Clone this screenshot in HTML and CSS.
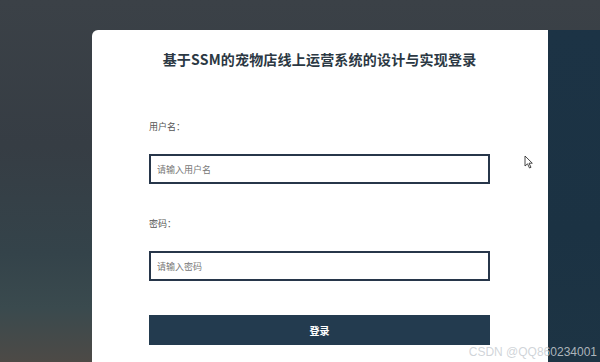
FILE: index.html
```html
<!DOCTYPE html>
<html lang="zh-CN">
<head>
  <meta charset="UTF-8">
  <meta name="viewport" content="width=device-width, initial-scale=1.0">
  <title>登录</title>
  <link rel="stylesheet" href="styles.css">
</head>
<body>
  <div class="login">
    <section class="form-pane">
      <h1 class="title">基于SSM的宠物店线上运营系统的设计与实现登录</h1>
      <form class="form">
        <label class="label label-user">用户名：</label>
        <input class="input" type="text" placeholder="请输入用户名">
        <label class="label label-pass">密码：</label>
        <input class="input" type="password" placeholder="请输入密码">
        <button class="btn" type="button">登录</button>
      </form>
    </section>
    <section class="side-pane"></section>
  </div>
  <svg class="cursor" width="10" height="14" viewBox="0 0 10 14">
    <path d="M1 1 L1 11 L3.5 8.8 L5.5 13 L7 12.3 L5 8.2 L8.3 8.2 Z" fill="#fff" stroke="#333" stroke-width="0.9" stroke-linejoin="round"/>
  </svg>
  <div class="watermark">CSDN @QQ860234001</div>
</body>
</html>
```
FILE: styles.css
```css
/* Base */
* { box-sizing: border-box; }
html, body { height: 100%; }
body {
  margin: 0;
  overflow: hidden;
  font-family: "Noto Sans CJK SC", "Noto Sans", sans-serif;
  background: linear-gradient(180deg, #3b4147 0%, #363d44 40%, #34434a 70%, #3a4a4e 85%, #4d4a46 100%);
  padding: 30px 0 0 92px;
  position: relative;
}

/* Login box */
.login {
  display: flex;
  height: 100%;
}
.form-pane {
  width: 456px;
  background: #fff;
  border-radius: 6px 0 0 0;
  padding: 19px 58px 0 57px;
}
.side-pane {
  flex: 1;
  background: linear-gradient(180deg, #1c3345 0%, #1b3243 60%, #1d3444 100%);
}

.title {
  margin: 0 -40px;
  height: 20px;
  line-height: 20px;
  font-size: 14px;
  font-weight: 700;
  color: #2b3843;
  text-align: center;
  letter-spacing: 0.2px;
  white-space: nowrap;
}

/* Form */
.form {
  display: flex;
  flex-direction: column;
}
.label {
  font-size: 9px;
  line-height: 12px;
  color: #555;
}
.label-user { margin-top: 52px; margin-bottom: 21px; }
.label-pass { margin-top: 34px; margin-bottom: 21px; }
.input {
  width: 100%;
  height: 30px;
  border: 2px solid #27364a;
  padding: 0 6px;
  font-family: inherit;
  font-size: 9px;
  color: #333;
  outline: none;
  background: #fff;
}
.input::placeholder { color: #777; }
.btn {
  margin-top: 34px;
  height: 30px;
  border: none;
  background: #233b4f;
  color: #fff;
  font-family: inherit;
  font-size: 10px;
  font-weight: 700;
}

/* Overlays */
.cursor {
  position: absolute;
  left: 524px;
  top: 155px;
}
.watermark {
  position: absolute;
  right: 3px;
  bottom: 3px;
  font-family: "Liberation Sans", sans-serif;
  font-size: 12px;
  color: rgba(200, 205, 210, 0.85);
}
```
